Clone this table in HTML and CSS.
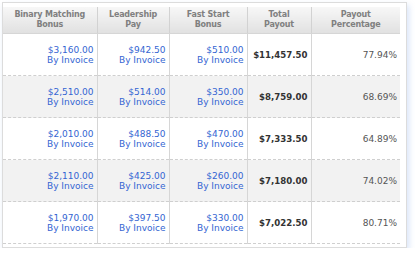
FILE: index.html
```html
<!DOCTYPE html>
<html>
<head>
<meta charset="utf-8">
<link rel="stylesheet" href="styles.css">
</head>
<body>
<div class="card">
  <table class="payouts">
    <colgroup>
      <col class="c1"><col class="c2"><col class="c3"><col class="c4"><col class="c5">
    </colgroup>
    <thead>
      <tr>
        <th>Binary Matching<br>Bonus</th>
        <th>Leadership<br>Pay</th>
        <th>Fast Start<br>Bonus</th>
        <th>Total<br>Payout</th>
        <th>Payout<br>Percentage</th>
      </tr>
    </thead>
    <tbody>
      <tr>
        <td class="link">$3,160.00<br>By Invoice</td>
        <td class="link">$942.50<br>By Invoice</td>
        <td class="link">$510.00<br>By Invoice</td>
        <td class="total">$11,457.50</td>
        <td class="pct">77.94%</td>
      </tr>
      <tr class="alt">
        <td class="link">$2,510.00<br>By Invoice</td>
        <td class="link">$514.00<br>By Invoice</td>
        <td class="link">$350.00<br>By Invoice</td>
        <td class="total">$8,759.00</td>
        <td class="pct">68.69%</td>
      </tr>
      <tr>
        <td class="link">$2,010.00<br>By Invoice</td>
        <td class="link">$488.50<br>By Invoice</td>
        <td class="link">$470.00<br>By Invoice</td>
        <td class="total">$7,333.50</td>
        <td class="pct">64.89%</td>
      </tr>
      <tr class="alt">
        <td class="link">$2,110.00<br>By Invoice</td>
        <td class="link">$425.00<br>By Invoice</td>
        <td class="link">$260.00<br>By Invoice</td>
        <td class="total">$7,180.00</td>
        <td class="pct">74.02%</td>
      </tr>
      <tr>
        <td class="link">$1,970.00<br>By Invoice</td>
        <td class="link">$397.50<br>By Invoice</td>
        <td class="link">$330.00<br>By Invoice</td>
        <td class="total">$7,022.50</td>
        <td class="pct">80.71%</td>
      </tr>
    </tbody>
  </table>
</div>
</body>
</html>
```
FILE: styles.css
```css
html, body {
  margin: 0;
  padding: 0;
  background: #fff;
}
body {
  padding: 2px 0 0 2px;
  font-family: "DejaVu Sans", Verdana, sans-serif;
}
.card {
  width: 398px;
  border: 1px solid #dcdcdc;
  padding: 4px 5px 3px 0;
  background: #fff;
  box-shadow: 2px 3px 6px rgba(140, 175, 235, 0.35);
}
.payouts {
  width: 397px;
  border-collapse: collapse;
  table-layout: fixed;
}
.c1 { width: 94px; }
.c2 { width: 72px; }
.c3 { width: 78px; }
.c4 { width: 64px; }
.c5 { width: 89px; }
.payouts th {
  height: 26px;
  padding: 0;
  font-size: 8px;
  font-weight: bold;
  letter-spacing: -0.2px;
  line-height: 10px;
  color: #808080;
  text-align: center;
  vertical-align: middle;
  background: linear-gradient(#f7f7f7, #e1e1e1);
  border-left: 1px solid #d2d2d2;
  border-bottom: 1px solid #d6d6d6;
}
.payouts th:first-child,
.payouts td:first-child {
  border-left: none;
}
.payouts td {
  height: 41px;
  padding: 0 3px 0 0;
  font-size: 9px;
  line-height: 10px;
  text-align: right;
  vertical-align: middle;
  border-left: 1px solid #d6d6d6;
  border-bottom: 1px dashed #cfcfcf;
}
.payouts tr.alt td {
  background: #f2f2f2;
}
.link {
  color: #3465d2;
}
.payouts td.total {
  font-size: 8.6px;
  font-weight: bold;
  color: #333;
}
.pct {
  color: #555;
}
```
